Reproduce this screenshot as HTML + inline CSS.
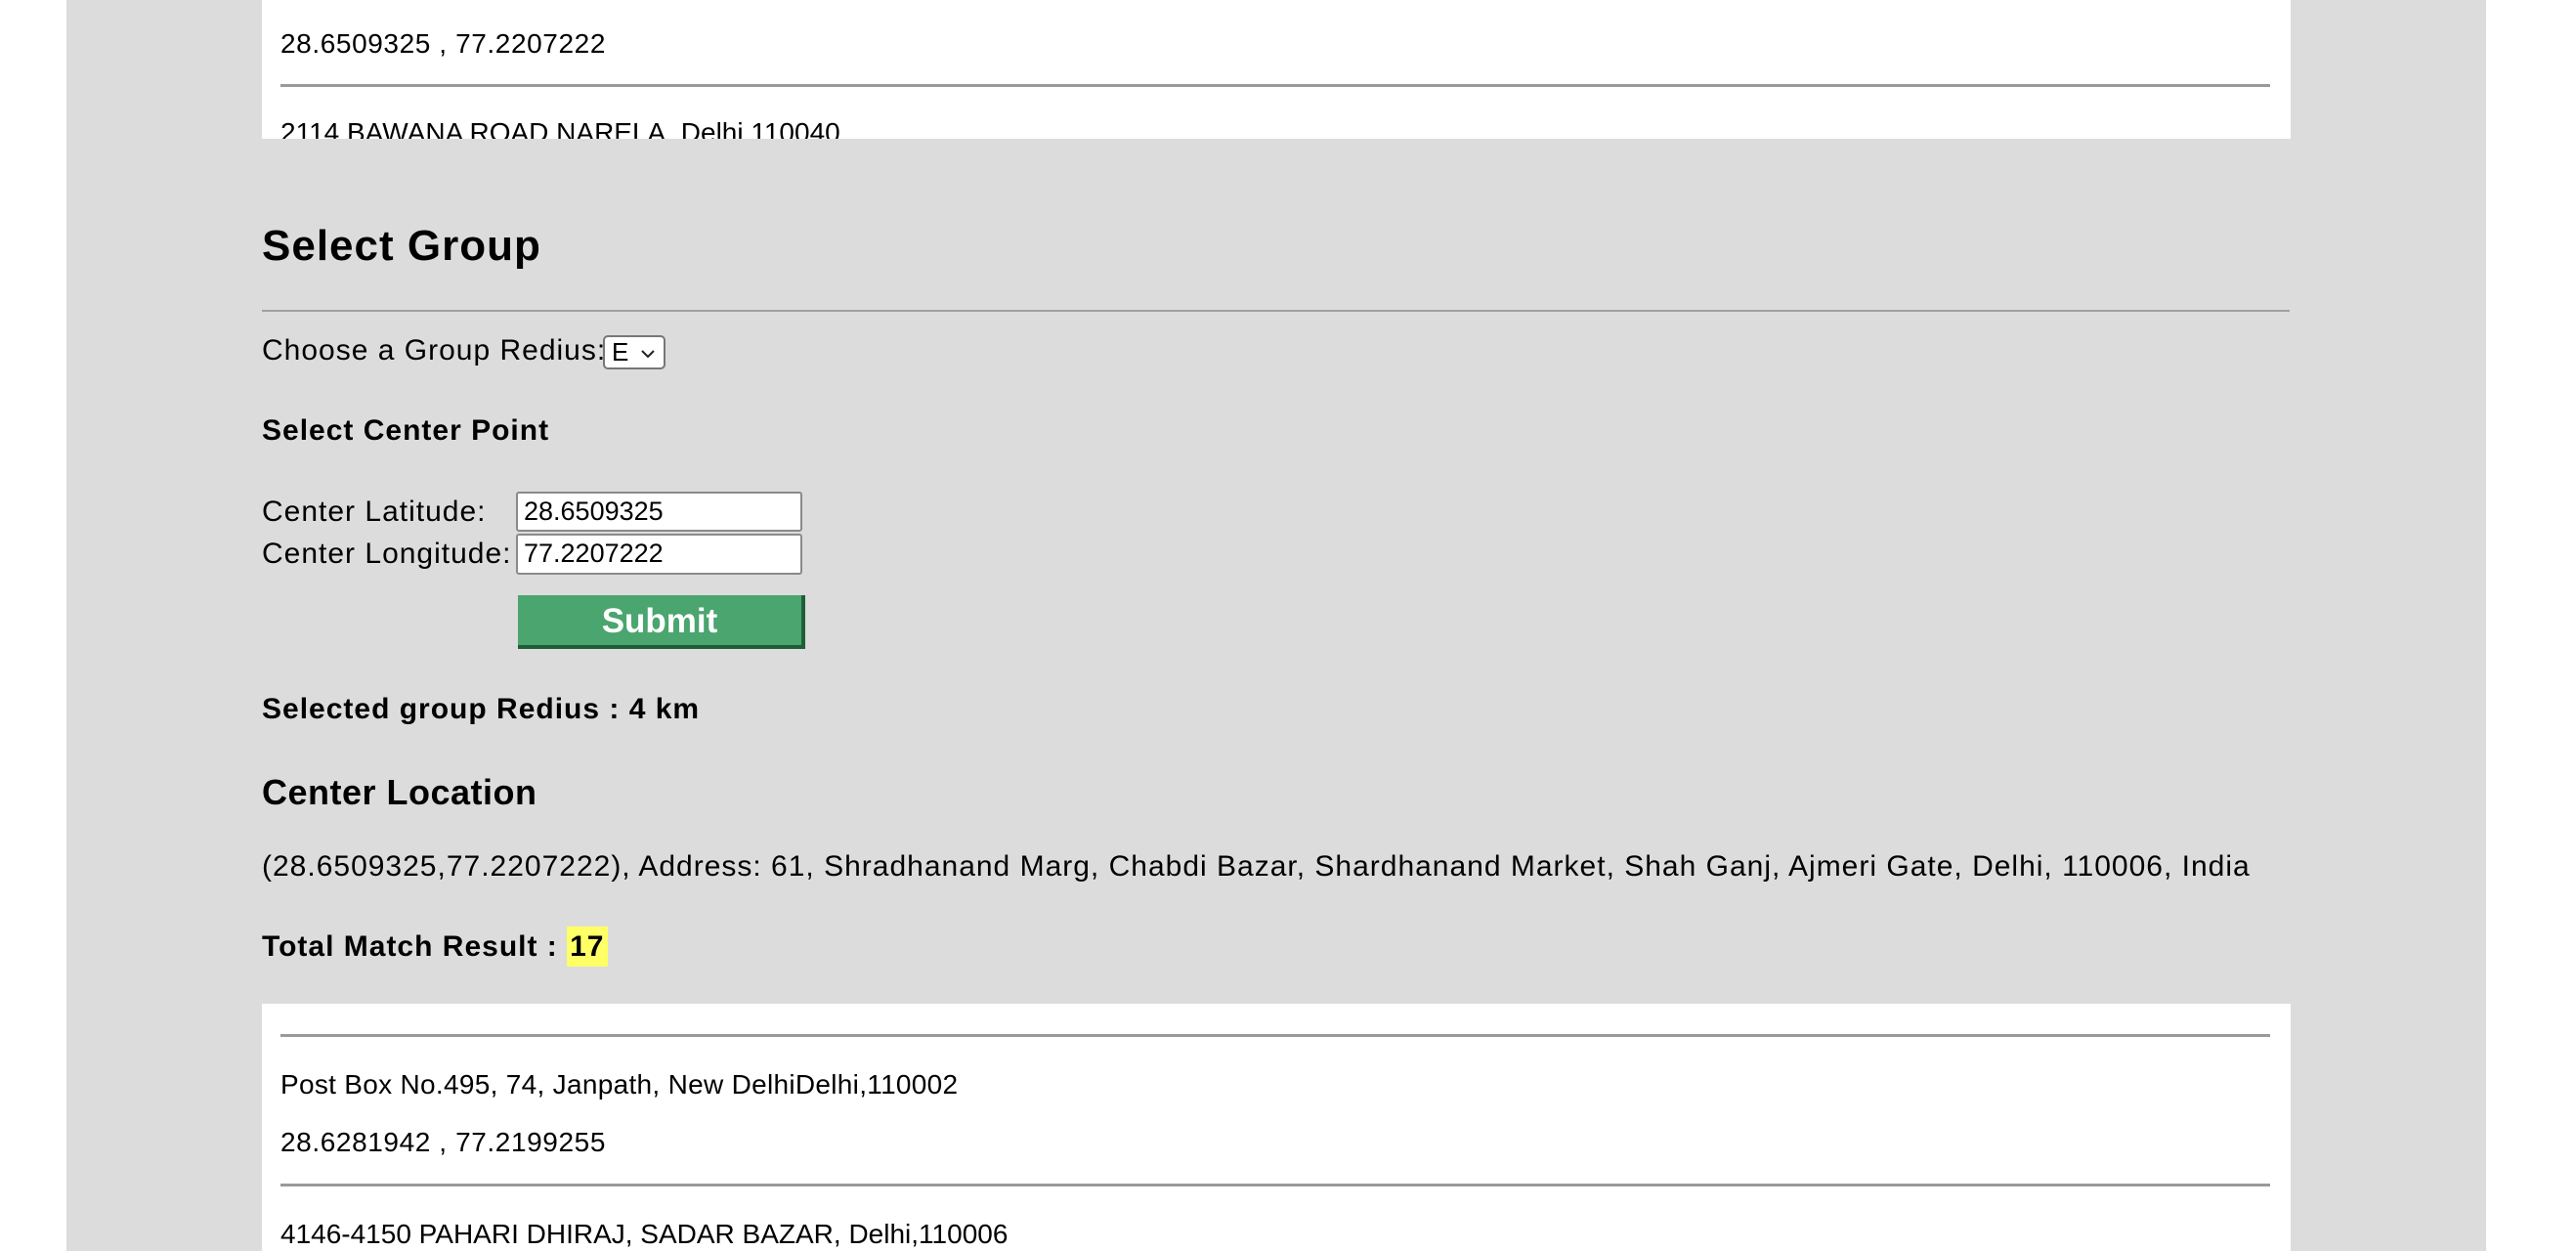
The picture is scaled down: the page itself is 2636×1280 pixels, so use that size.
<!DOCTYPE html>
<html><head><meta charset="utf-8"><style>
*{margin:0;padding:0;box-sizing:border-box}
html,body{width:2636px;height:1280px;overflow:hidden;background:#fff;font-family:"Liberation Sans",Arial,sans-serif;color:#000}
.gray{position:absolute;left:68px;top:0;width:2476px;height:1280px;background:#dcdcdc}
.white{position:absolute;left:268px;width:2076px;background:#fff;overflow:hidden}
.t{position:absolute;white-space:nowrap;font-size:30px;line-height:34px;letter-spacing:1px}
.s{font-size:28px;letter-spacing:0.3px}
.b{font-weight:bold}
.hr{position:absolute;height:3px;background:#9a9a9a}
.inp{position:absolute;background:#fff;border:2px solid #8a8a8a;border-radius:3px;font-size:27px;line-height:36px;padding-left:6px}
</style></head><body>
<div class="gray"></div>
<div class="white" style="top:0;height:142px">
  <div class="t s" style="left:19px;top:28px;letter-spacing:0.6px">28.6509325 , 77.2207222</div>
  <div class="hr" style="left:19px;top:86px;width:2036px"></div>
  <div class="t s" style="left:19px;top:119px;letter-spacing:0">2114 BAWANA ROAD NARELA, Delhi,110040</div>
</div>
<div class="t b" style="left:268px;top:226px;font-size:44px;line-height:52px;letter-spacing:1px">Select Group</div>
<div class="hr" style="left:268px;top:317px;width:2075px;height:2px;background:#a0a0a0"></div>
<div class="t" style="left:268px;top:342px">Choose a Group Redius:</div>
<div style="position:absolute;left:617px;top:343px;width:64px;height:35px;background:#fff;border:2px solid #777;border-radius:5px;font-size:26px;line-height:31px;padding-left:7px">E<svg style="position:absolute;left:36px;top:11px" width="16" height="12" viewBox="0 0 16 12"><path d="M2 3 L8 9 L14 3" fill="none" stroke="#222" stroke-width="2"/></svg></div>
<div class="t b" style="left:268px;top:424px">Select Center Point</div>
<div class="t" style="left:268px;top:507px">Center Latitude:</div>
<div class="inp" style="left:528px;top:503px;width:293px;height:41px">28.6509325</div>
<div class="t" style="left:268px;top:550px">Center Longitude:</div>
<div class="inp" style="left:528px;top:546px;width:293px;height:42px">77.2207222</div>
<div style="position:absolute;left:530px;top:609px;width:294px;height:55px;background:#4aa56f;border-right:4px solid #1f5f36;border-bottom:4px solid #1f5f36;color:#fff;font-weight:bold;font-size:35px;line-height:53px;text-align:center">Submit</div>
<div class="t b" style="left:268px;top:709px">Selected group Redius : 4 km</div>
<div class="t b" style="left:268px;top:791px;font-size:36px;line-height:40px;letter-spacing:0.5px">Center Location</div>
<div class="t" style="left:268px;top:870px">(28.6509325,77.2207222), Address: 61, Shradhanand Marg, Chabdi Bazar, Shardhanand Market, Shah Ganj, Ajmeri Gate, Delhi, 110006, India</div>
<div class="t b" style="left:268px;top:952px">Total Match Result : <span style="background:#ffff66;padding:4px 3px">17</span></div>
<div class="white" style="top:1027px;height:253px">
  <div class="hr" style="left:19px;top:31px;width:2036px"></div>
  <div class="t s" style="left:19px;top:66px">Post Box No.495, 74, Janpath, New DelhiDelhi,110002</div>
  <div class="t s" style="left:19px;top:125px;letter-spacing:0.6px">28.6281942 , 77.2199255</div>
  <div class="hr" style="left:19px;top:184px;width:2036px"></div>
  <div class="t s" style="left:19px;top:219px;letter-spacing:0">4146-4150 PAHARI DHIRAJ, SADAR BAZAR, Delhi,110006</div>
</div>
</body></html>
